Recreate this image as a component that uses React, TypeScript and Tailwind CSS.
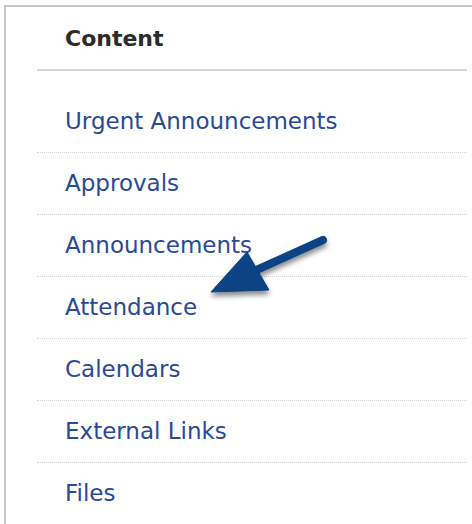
import React from 'react';

const links: string[] = [
  'Urgent Announcements',
  'Approvals',
  'Announcements',
  'Attendance',
  'Calendars',
  'External Links',
  'Files',
];

function Arrow() {
  return (
    <svg
      className="absolute left-0 top-0 pointer-events-none"
      width="472"
      height="524"
      viewBox="0 0 472 524"
    >
      <defs>
        <filter id="arrowShadow" x="-20%" y="-20%" width="140%" height="160%">
          <feDropShadow dx="0" dy="4" stdDeviation="2.5" floodColor="#000" floodOpacity="0.45" />
        </filter>
      </defs>
      <g filter="url(#arrowShadow)" fill="#0b4283" stroke="#0b4283">
        <line x1="323" y1="240" x2="252" y2="272" strokeWidth="8" strokeLinecap="round" />
        <polygon points="211,292 247,252 269,290" strokeWidth="1" strokeLinejoin="round" />
      </g>
    </svg>
  );
}

function App() {
  return (
    <div className="relative w-[472px] h-[524px] overflow-hidden bg-white pt-[5px] pl-[4px] font-['DejaVu_Sans',sans-serif]">
      <div className="h-full border-l-2 border-t-2 border-[#c6c6c6] pl-[31px] pr-[5px]">
        <div className="h-[64px] flex items-center pl-[28px] border-b-2 border-[#d6d6d6]">
          <span className="text-[22px] font-bold text-[#2b2b2b]">Content</span>
        </div>
        <ul className="pt-[20px]">
          {links.map((link) => (
            <li
              key={link}
              className="h-[62px] flex items-center pl-[28px] pb-[1px] border-b border-dotted border-[#d4d4d4]"
            >
              <a href="#" className="text-[23px] text-[#2a4996]">
                {link}
              </a>
            </li>
          ))}
        </ul>
      </div>
      <Arrow />
    </div>
  );
}

export default App;
